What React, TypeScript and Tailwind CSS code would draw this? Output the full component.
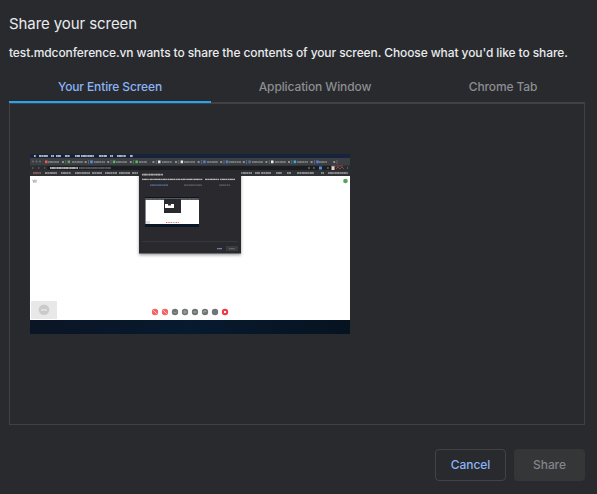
import React from "react";

type Dash = [x: number, y: number, w: number, color?: string];

const patterns = ["1.6 .4 2.8 .6 .8 .5", "2.4 .5 1.2 .7 3 .4", "1 .5 3.4 .5 1.8 .8"];

function Dashes({ items, h = 1.6, color = "#c8cacc" }: { items: Dash[]; h?: number; color?: string }) {
  return (
    <g>
      {items.map(([x, y, w, c], i) => (
        <g key={i}>
          <rect x={x} y={y} width={w} height={h} fill={c ?? color} opacity={0.3} />
          <path d={`M${x} ${y + h / 2}h${w}`} stroke={c ?? color} strokeWidth={h} strokeDasharray={patterns[i % 3]} opacity={0.5} />
        </g>
      ))}
    </g>
  );
}

const menu: Dash[] = [[4, 1, 2], [9, 1, 9], [21, 1, 3], [26, 1, 5], [35, 1, 5], [45, 1, 5], [51, 1, 13], [69, 1, 8], [80, 1, 3], [87, 1, 9], [100, 1, 3]];
const tabs: Dash[] = [[18, 7.2, 11], [42, 7.2, 11], [64, 7.2, 11], [86, 7.2, 11], [109, 7.2, 8], [132, 7.2, 10], [154, 7.2, 11], [177, 7.2, 11], [199, 7.2, 12], [222, 7.2, 11], [245, 7.2, 11], [267, 7.2, 11], [289, 7.2, 8]];
const icons = ["#ed5a53", "#62a36b", "#5196e6", "#54b968", "#53c152", "#e7e7e7", "#e7e7e7", "#5181d6", "#5181c6", "#55769f", "#eee", "#3bace0", "#5181e6"];
const marks: Dash[] = [[3, 18.2, 8, "#d17d7b"], [15, 18.2, 12], [31, 18.2, 10], [45, 18.2, 15], [62, 18.2, 10], [75, 18.2, 12], [89, 18.2, 11], [102, 18.2, 6], [211, 18.2, 11], [225, 18.2, 5], [231, 18.2, 10], [246, 18.2, 6], [257, 18.2, 4], [267, 18.2, 17], [291, 18.2, 3], [298, 18.2, 20]];

function ScreenPreview() {
  return (
    <svg width="320" height="180" viewBox="0 0 320 180" className="block">
      <defs>
        <linearGradient id="dock" x1="0" x2="1">
          <stop offset="0" stopColor="#0a1525" />
          <stop offset=".5" stopColor="#071a2e" />
          <stop offset="1" stopColor="#061321" />
        </linearGradient>
        <filter id="shadow" x="-10%" y="-10%" width="120%" height="125%">
          <feDropShadow dx="0" dy="1.5" stdDeviation="1.8" floodColor="#000" floodOpacity=".4" />
        </filter>
      </defs>
      <rect width="320" height="180" fill="#fff" />
      <rect width="320" height="4" fill="#17233b" />
      <Dashes items={menu} color="#fff" h={2} />
      <rect y="4" width="320" height="8" fill="#3b3e42" />
      <rect y="11.5" width="320" height="5.5" fill="#2a2c2f" />
      <rect x="17" y="12" width="287" height="4" rx="2" fill="#1b1d20" />
      <rect y="16.5" width="320" height="5.5" fill="#303236" />
      {[3, 6.5, 10].map((x) => <circle key={x} cx={x} cy="7.5" r="1" fill="#686b6f" />)}
      <Dashes items={tabs} color="#a4a8ab" />
      {icons.map((c, i) => (
        <g key={i}>
          <rect x={15 + i * 22.6} y="6.5" width="2.5" height="2.7" fill={c} />
          <rect x={32 + i * 22.6} y="7" width="2" height="2" fill="#8c9092" />
          <rect x={35.5 + i * 22.6} y="6" width=".6" height="4" fill="#777a7e" />
        </g>
      ))}
      <Dashes items={[[2, 13.2, 1.5], [8, 13.2, 1.5], [14, 13.2, 1.5]]} color="#73777a" />
      <Dashes items={[[20, 13, 28]]} color="#fff" h={2} />
      <Dashes items={[[49, 13.2, 32], [278, 13.2, 2], [283, 13.2, 2], [297, 13.2, 2], [317, 13.2, 1]]} color="#8c9093" />
      <rect x="289" y="12.5" width="3" height="3" fill="#4a8ce0" />
      <rect x="301.5" y="12" width="3" height="4" fill="#ead7cc" />
      <path d="M301 12h12M306 15l2-2 2 2 2-2 2 2" stroke="#a24d4c" strokeWidth=".8" fill="none" />
      <Dashes items={marks} color="#d2d3d5" />
      <path d="M2.5 26.5h4.5M3 28h3.5" stroke="#aaa" strokeWidth="1.5" strokeDasharray="1 .4" />
      <circle cx="315.5" cy="27" r="2.3" fill="#55a657" />

      <rect x="109" y="16" width="102" height="83.5" fill="#292a2d" filter="url(#shadow)" />
      <Dashes items={[[112, 19.8, 21]]} color="#f2f2f2" />
      <Dashes items={[[112, 24.8, 7], [119.5, 24.8, 18], [138, 24.8, 12], [150.5, 24.8, 22], [175, 24.8, 14], [190, 24.8, 15]]} color="#fff" h={1.3} />
      <Dashes items={[[120, 30.5, 18, "#668ed2"], [154, 30.5, 18], [189, 30.5, 11]]} color="#76797e" h={1.3} />
      <rect x="115" y="43" width="54" height="30" fill="#091626" />
      <rect x="115" y="44" width="54" height="2" fill="#4c4e52" />
      <path d="M116 45h52" stroke="#aaa" strokeWidth=".7" strokeDasharray="2 .8 1 .5" opacity=".5" />
      <rect x="115.5" y="46" width="53.5" height="24" fill="#fff" />
      <rect x="134" y="45" width="17" height="14" fill="#292a2d" />
      <rect x="135" y="50" width="9" height="4" fill="#fff" />
      <rect x="138" y="49.5" width="3" height="2" fill="#333" />
      <rect x="116" y="67" width="4" height="3" fill="#ddd" />
      <path d="M136 68.5h5" stroke="#e75a60" strokeWidth="1" strokeDasharray="1 .7" />
      <path d="M141 68.5h5" stroke="#9a9c9c" strokeWidth="1" strokeDasharray="1 .7" />
      <path d="M146 68.5h3" stroke="#e75a60" strokeWidth="1" strokeDasharray="1 .7" />
      <path d="M112 87.5h96" stroke="#3a3c40" strokeWidth=".8" />
      <Dashes items={[[187, 94, 5]]} color="#89b4fa" h={1.3} />
      <rect x="196" y="92" width="12" height="5" fill="#393b3e" />
      <Dashes items={[[199, 94, 6]]} color="#7c7f82" h={1.3} />

      <rect x="1" y="147" width="26" height="18" fill="#e8e8e8" />
      <circle cx="14" cy="155.8" r="5.3" fill="#cacaca" />
      <path d="M12 157v-2l1.5 1.5 1-1.5 1.5 2v-2" stroke="#f4f4f4" strokeWidth=".7" fill="none" />
      {[125, 135, 145, 155, 165, 175, 185, 195].map((x, i) => (
        <g key={x}>
          <circle cx={x} cy="158" r="3.2" fill={i < 2 ? "#ee6665" : i === 7 ? "#f13b4b" : "#727575"} />
          {i < 2 && <path d={`M${x - 1.7} 156.3l3.4 3.4`} stroke="#ffd6d6" strokeWidth=".9" />}
          {i === 2 && <path d={`M${x - 1.3} 158l1.3 1 1.5-1`} stroke="#aaa" strokeWidth=".7" fill="none" />}
          {i === 3 && <circle cx={x} cy="158" r="1.2" stroke="#bbb" strokeWidth=".7" fill="none" />}
          {i === 4 && <path d={`M${x - 1.7} 158h3.4`} stroke="#bbb" strokeWidth=".8" />}
          {i === 5 && <path d={`M${x - 1.2} 159v-2h2.2v1`} stroke="#bbb" strokeWidth=".7" fill="none" />}
          {i === 7 && <rect x={x - 1} y="157" width="2" height="2" fill="#fff" />}
        </g>
      ))}
      <rect y="166" width="320" height="14" fill="url(#dock)" />
    </svg>
  );
}

export default function App() {
  return (
    <main className="flex h-[494px] w-[597px] flex-col bg-[#292a2d] pl-[9px] pr-3 font-['Inter','Liberation_Sans',sans-serif] text-[12px] font-medium tracking-[-0.095px] text-[#e8eaed]">
      <h1 className="mt-[14px] h-5 text-[15px] leading-5 font-normal tracking-[-0.08px] whitespace-nowrap">Share your screen</h1>
      <p className="mt-[11px] h-4 leading-4 whitespace-nowrap">
        test.mdconference.vn wants to share the contents of your screen. Choose what you'd like to share.
      </p>
      <div role="tablist" className="mt-4 flex h-[26px] tracking-[-0.12px] text-[#8b8e92]">
        <button role="tab" aria-selected="true" className="relative z-10 h-[26px] w-[202px] shrink-0 border-b-2 border-[#27a2f4] pb-1 leading-4 whitespace-nowrap text-[#8ab4f8]">Your Entire Screen</button>
        <button role="tab" className="w-[208px] shrink-0 pb-[6px] leading-4 whitespace-nowrap">Application Window</button>
        <button role="tab" className="w-[168px] shrink-0 pb-[6px] leading-4 whitespace-nowrap">Chrome Tab</button>
      </div>
      <section className="-mt-px h-[323px] w-[576px] border border-t-2 border-[#404144] pt-[50px] pl-5">
        <ScreenPreview />
      </section>
      <footer className="mt-6 flex justify-end gap-2">
        <button className="h-8 w-[71px] rounded border border-[#424346] text-[#8ab4f8]">Cancel</button>
        <button disabled className="h-8 w-[71px] rounded bg-[#353638] text-[#828488]">Share</button>
      </footer>
    </main>
  );
}
